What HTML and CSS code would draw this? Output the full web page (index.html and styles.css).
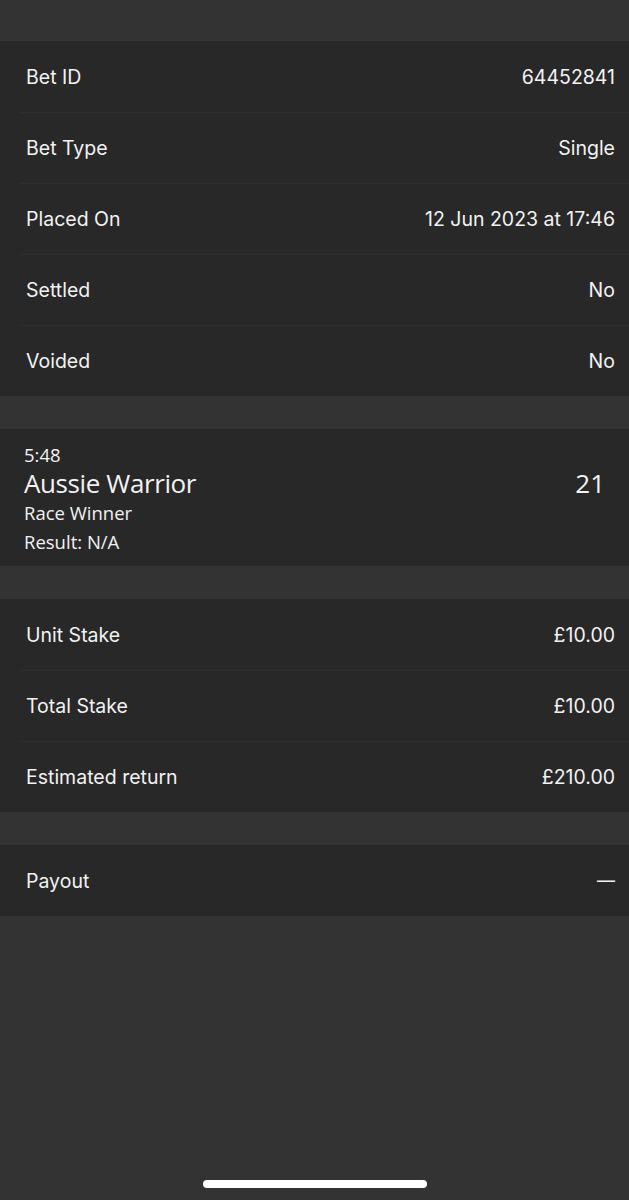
FILE: index.html
```html
<!DOCTYPE html>
<html lang="en">
<head>
  <meta charset="UTF-8">
  <meta name="viewport" content="width=device-width, initial-scale=1.0">
  <title>Bet Details</title>
  <link rel="stylesheet" href="styles.css">
</head>
<body>
  <div class="screen">
    <!-- Bet summary -->
    <section class="group">
      <div class="row"><span>Bet ID</span><span>64452841</span></div>
      <div class="row"><span>Bet Type</span><span>Single</span></div>
      <div class="row"><span>Placed On</span><span>12 Jun 2023 at 17:46</span></div>
      <div class="row"><span>Settled</span><span>No</span></div>
      <div class="row"><span>Voided</span><span>No</span></div>
    </section>

    <!-- Selection -->
    <section class="group selection">
      <div class="sel-time">5:48</div>
      <div class="sel-main">
        <span class="sel-name">Aussie Warrior</span>
        <span class="sel-odds">21</span>
      </div>
      <div class="sel-line">Race Winner</div>
      <div class="sel-line">Result: N/A</div>
    </section>

    <!-- Stakes -->
    <section class="group">
      <div class="row"><span>Unit Stake</span><span>£10.00</span></div>
      <div class="row"><span>Total Stake</span><span>£10.00</span></div>
      <div class="row"><span>Estimated return</span><span>£210.00</span></div>
    </section>

    <section class="group">
      <div class="row"><span>Payout</span><span class="dash">—</span></div>
    </section>
  </div>

  <div class="home-bar"></div>
</body>
</html>
```

FILE: styles.css
```css
body {
  margin: 0;
  background-color: #333333;
  color: #f2f2f2;
  font-family: Inter, Roboto, "Liberation Sans", sans-serif;
  height: 1200px;
  position: relative;
  overflow: hidden;
}

.screen {
  padding-top: 41px;
  display: flex;
  flex-direction: column;
  gap: 33px;
}

.group {
  background-color: #282828;
}

.row {
  height: 71px;
  display: flex;
  justify-content: space-between;
  align-items: center;
  padding: 0 14px 0 26px;
  font-size: 19.5px;
  position: relative;
}

.row + .row::before {
  content: "";
  position: absolute;
  top: 0;
  left: 20px;
  right: 0;
  height: 1px;
  background-color: #2e2e2e;
}

/* Selection card */
.selection {
  padding: 11px 24px 10px 24px;
  font-family: "Open Sans", "Noto Sans", sans-serif;
  line-height: 29px;
  font-size: 18.5px;
}

.sel-main {
  display: flex;
  justify-content: space-between;
  align-items: center;
}

.sel-name,
.sel-odds {
  font-size: 26px;
}

.sel-name {
  letter-spacing: -0.4px;
}

.dash {
  font-size: 18px;
}

.home-bar {
  position: absolute;
  left: 203px;
  top: 1180px;
  width: 224px;
  height: 8px;
  border-radius: 4px;
  background-color: #ffffff;
}
```
